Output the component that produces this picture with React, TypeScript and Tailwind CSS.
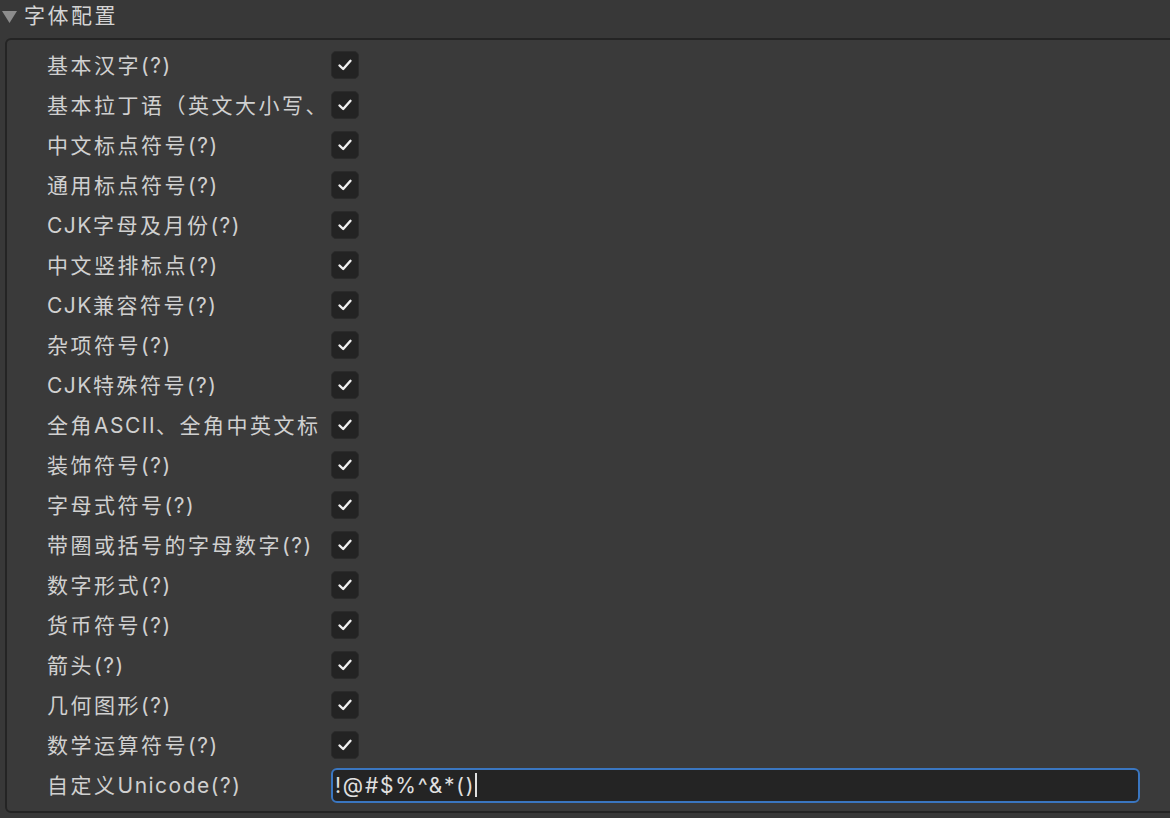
import React from "react";

const labels = [
  "基本汉字(?)",
  "基本拉丁语（英文大小写、数字、英文标点）(?)",
  "中文标点符号(?)",
  "通用标点符号(?)",
  "CJK字母及月份(?)",
  "中文竖排标点(?)",
  "CJK兼容符号(?)",
  "杂项符号(?)",
  "CJK特殊符号(?)",
  "全角ASCII、全角中英文标点(?)",
  "装饰符号(?)",
  "字母式符号(?)",
  "带圈或括号的字母数字(?)",
  "数字形式(?)",
  "货币符号(?)",
  "箭头(?)",
  "几何图形(?)",
  "数学运算符号(?)",
];

const font = {
  fontFamily: 'Inter, "Noto Sans CJK SC", sans-serif',
};

function Mixed({ text }: { text: string }) {
  const parts = text.split(/([\u3000-\u9fff\uff00-\uffef]+)/).filter((p) => p.length > 0);
  return (
    <>
      {parts.map((p, i) =>
        /[\u3000-\u9fff\uff00-\uffef]/.test(p) ? (
          <span key={i} className="tracking-[2.5px]">{p}</span>
        ) : (
          <span key={i} className="tracking-[1.5px]">{p}</span>
        )
      )}
    </>
  );
}

function Check() {
  return (
    <div className="w-[28px] h-[28px] rounded-[5px] bg-[#232323] border border-[#2b2b2b] flex items-center justify-center shrink-0">
      <svg width="18" height="18" viewBox="0 0 18 18" fill="none">
        <path d="M3.5 9.5 L7.2 13 L14.5 4.8" stroke="#f0f0f0" strokeWidth="2.4" strokeLinecap="round" strokeLinejoin="round" />
      </svg>
    </div>
  );
}

export default function App() {
  return (
    <div className="w-[1170px] h-[818px] bg-[#383838] overflow-hidden text-[#d2d2d2]" style={font}>
      <div className="h-[31px] flex items-center">
        <svg width="18" height="14" viewBox="0 0 18 14" className="ml-[1px] mt-[1px]">
          <path d="M1 2 L16 2 L8.5 14 Z" fill="#8c8c8c" />
        </svg>
        <span className="ml-[5px] text-[21px] tracking-[2.5px] leading-none text-[#d4d4d4]">字体配置</span>
      </div>
      <div className="ml-[5px] mt-[7px] w-[1180px] h-[775px] bg-[#3a3a3a] border-2 border-[#242424] rounded-[6px] pt-[5px]">
        {labels.map((l) => (
          <div key={l} className="h-[40px] flex items-center">
            <div className="ml-[40px] w-[274px] overflow-hidden whitespace-nowrap text-[21px] leading-none text-[#d0d0d0]">
              <Mixed text={l} />
            </div>
            <div className="ml-[10px]">
              <Check />
            </div>
          </div>
        ))}
        <div className="h-[40px] flex items-center">
          <div className="ml-[40px] w-[274px] overflow-hidden whitespace-nowrap text-[21px] leading-none text-[#d0d0d0]">
            <Mixed text="自定义Unicode(?)" />
          </div>
          <div className="ml-[10px] w-[809px] h-[35px] rounded-[6px] border-2 border-[#3a76c0] bg-[#242424] flex items-center pl-[2px]">
            <span className="text-[21px] leading-none text-[#e0e0e0] tracking-[1.8px]">!@#$%^&amp;*()</span>
            <span className="w-[2px] h-[24px] bg-[#e0e0e0]" />
          </div>
        </div>
      </div>
    </div>
  );
}
